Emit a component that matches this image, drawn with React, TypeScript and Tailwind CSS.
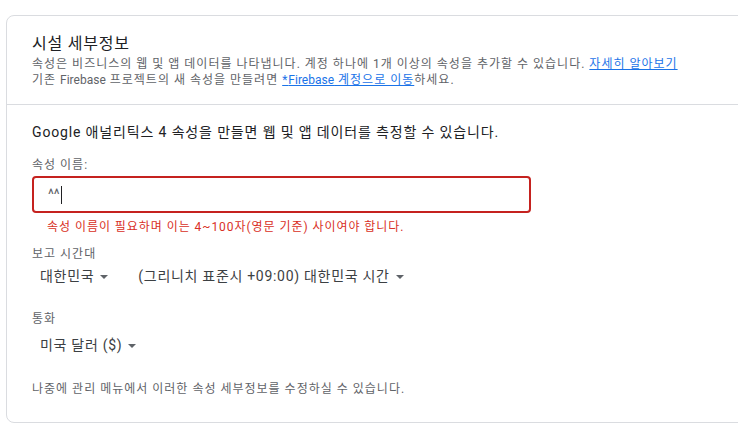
import React from 'react';

const font = { fontFamily: 'Roboto, "Noto Sans CJK KR", sans-serif' };

const Caret = () => (
  <svg width="8" height="4" viewBox="0 0 8 4" className="ml-[6px] mt-[2px] shrink-0">
    <path d="M0 0 L8 0 L4 4 Z" fill="#5f6368" />
  </svg>
);

const Dropdown = ({ label }: { label: string }) => (
  <button className="flex items-center px-2 h-[28px] text-[14px] tracking-[0.7px] text-[#3c4043] rounded hover:bg-gray-100">
    <span>{label}</span>
    <Caret />
  </button>
);

export default function App() {
  return (
    <div className="w-[738px] h-[431px] overflow-hidden bg-white pt-[15px] pl-[6px]" style={font}>
      <div className="w-[800px] border border-[#dadce0] rounded-lg bg-white">
        <div className="pl-[25px] pt-[16px] pb-[16px] border-b border-[#dadce0]">
          <h2 className="text-[16px] leading-[24px] tracking-[0.8px] text-[#202124]">시설 세부정보</h2>
          <p className="text-[12px] leading-[16px] tracking-[1px] text-[#5f6368]">
            속성은 비즈니스의 웹 및 앱 데이터를 나타냅니다. 계정 하나에 1개 이상의 속성을 추가할 수 있습니다.{' '}
            <a className="text-[#1a73e8] underline">자세히 알아보기</a>
          </p>
          <p className="text-[12px] leading-[16px] tracking-[1px] text-[#5f6368]">
            기존 <span className="tracking-normal">Firebase</span> 프로젝트의 새 속성을 만들려면{' '}
            <a className="text-[#1a73e8] underline">
              *<span className="tracking-normal">Firebase</span> 계정으로 이동
            </a>
            하세요.
          </p>
        </div>
        <div className="pl-[25px] pt-[17px] pb-[25px]">
          <p className="text-[14px] leading-[20px] tracking-[0.85px] text-[#202124]">
            Google 애널리틱스 4 속성을 만들면 웹 및 앱 데이터를 측정할 수 있습니다.
          </p>
          <div className="mt-[15px] text-[12px] leading-[16px] tracking-[1px] text-[#5f6368]">속성 이름:</div>
          <div className="mt-[3px] w-[499px] h-[37px] border-2 border-[#c5221f] rounded-[4px] flex items-center pl-[14px]">
            <span className="text-[14px] text-[#5f6368]">^^</span>
            <span className="w-px h-[18px] bg-[#202124] ml-[1px]" />
          </div>
          <div className="mt-[6px] pl-[15px] text-[12px] leading-[16px] tracking-[0.95px] text-[#d93025]">
            속성 이름이 필요하며 이는 4~100자(영문 기준) 사이여야 합니다.
          </div>
          <div className="mt-[11px] text-[12px] leading-[16px] tracking-[1px] text-[#5f6368]">보고 시간대</div>
          <div className="flex items-center gap-[14px]">
            <Dropdown label="대한민국" />
            <Dropdown label="(그리니치 표준시 +09:00) 대한민국 시간" />
          </div>
          <div className="mt-[21px] text-[12px] leading-[16px] tracking-[1px] text-[#5f6368]">통화</div>
          <div className="mt-[4px] flex">
            <Dropdown label="미국 달러 ($)" />
          </div>
          <p className="mt-[22px] text-[12px] leading-[16px] tracking-[1px] text-[#5f6368]">
            나중에 관리 메뉴에서 이러한 속성 세부정보를 수정하실 수 있습니다.
          </p>
        </div>
      </div>
    </div>
  );
}
